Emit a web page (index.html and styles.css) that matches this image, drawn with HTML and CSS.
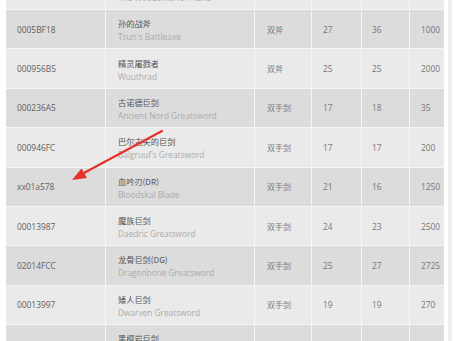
FILE: index.html
```html
<!DOCTYPE html>
<html lang="zh">
<head>
<meta charset="utf-8">
<title>双手武器代码</title>
<link rel="stylesheet" href="styles.css">
</head>
<body>
<div class="page">
  <div class="sheet">
    <div class="row light">
      <div class="cell id">000AE086</div>
      <div class="cell name"><span class="zh">伐木者之友</span><span class="en">The Woodsman's Friend</span></div>
      <div class="cell type">双斧</div>
      <div class="cell num">20</div>
      <div class="cell num">24</div>
      <div class="cell num">500</div>
    </div>
    <div class="row dark">
      <div class="cell id">0005BF18</div>
      <div class="cell name"><span class="zh">孙的战斧</span><span class="en">Tsun's Battleaxe</span></div>
      <div class="cell type">双斧</div>
      <div class="cell num">27</div>
      <div class="cell num">36</div>
      <div class="cell num">1000</div>
    </div>
    <div class="row light">
      <div class="cell id">000956B5</div>
      <div class="cell name"><span class="zh">精灵屠戮者</span><span class="en">Wuuthrad</span></div>
      <div class="cell type">双斧</div>
      <div class="cell num">25</div>
      <div class="cell num">25</div>
      <div class="cell num">2000</div>
    </div>
    <div class="row dark">
      <div class="cell id">000236A5</div>
      <div class="cell name"><span class="zh">古诺德巨剑</span><span class="en">Ancient Nord Greatsword</span></div>
      <div class="cell type">双手剑</div>
      <div class="cell num">17</div>
      <div class="cell num">18</div>
      <div class="cell num">35</div>
    </div>
    <div class="row light">
      <div class="cell id">000946FC</div>
      <div class="cell name"><span class="zh">巴尔古夫的巨剑</span><span class="en">Balgruuf's Greatsword</span></div>
      <div class="cell type">双手剑</div>
      <div class="cell num">17</div>
      <div class="cell num">17</div>
      <div class="cell num">200</div>
    </div>
    <div class="row dark">
      <div class="cell id">xx01a578</div>
      <div class="cell name"><span class="zh">血吟刃(DR)</span><span class="en">Bloodskal Blade</span></div>
      <div class="cell type">双手剑</div>
      <div class="cell num">21</div>
      <div class="cell num">16</div>
      <div class="cell num">1250</div>
    </div>
    <div class="row light">
      <div class="cell id">00013987</div>
      <div class="cell name"><span class="zh">魔族巨剑</span><span class="en">Daedric Greatsword</span></div>
      <div class="cell type">双手剑</div>
      <div class="cell num">24</div>
      <div class="cell num">23</div>
      <div class="cell num">2500</div>
    </div>
    <div class="row dark">
      <div class="cell id">02014FCC</div>
      <div class="cell name"><span class="zh">龙骨巨剑(DG)</span><span class="en">Dragonbone Greatsword</span></div>
      <div class="cell type">双手剑</div>
      <div class="cell num">25</div>
      <div class="cell num">27</div>
      <div class="cell num">2725</div>
    </div>
    <div class="row light">
      <div class="cell id">00013997</div>
      <div class="cell name"><span class="zh">矮人巨剑</span><span class="en">Dwarven Greatsword</span></div>
      <div class="cell type">双手剑</div>
      <div class="cell num">19</div>
      <div class="cell num">19</div>
      <div class="cell num">270</div>
    </div>
    <div class="row dark">
      <div class="cell id">0001399F</div>
      <div class="cell name"><span class="zh">黑檀岩巨剑</span><span class="en">Ebony Greatsword</span></div>
      <div class="cell type">双手剑</div>
      <div class="cell num">22</div>
      <div class="cell num">22</div>
      <div class="cell num">1440</div>
    </div>
  </div>
  <div class="rail"></div>
  <svg class="arrow" width="459" height="341" viewBox="0 0 459 341" aria-hidden="true">
    <line x1="162" y1="131" x2="82" y2="174" stroke="#e5322b" stroke-width="2.2" stroke-linecap="round"/>
    <polygon points="72,180 87,178 81.5,168.5" fill="#e5322b"/>
  </svg>
</div>
</body>
</html>
```

FILE: styles.css
```css
html, body {
  margin: 0;
  padding: 0;
  background: #ffffff;
}

.page {
  position: relative;
  width: 459px;
  height: 341px;
  overflow: hidden;
  display: flex;
  align-items: flex-start;
  font-family: "Open Sans", "Noto Sans CJK SC", sans-serif;
}

.sheet {
  margin-top: -29.375px;
  margin-left: 6px;
  width: 438px;
  flex: none;
  display: grid;
  row-gap: 1px;
  background: #f6f6f6;
}

.row {
  display: grid;
  grid-template-columns: 99px 148px 56px 49px 47px 34px;
  column-gap: 1px;
  height: 38.375px;
}

.cell {
  display: flex;
  align-items: center;
  padding-left: 11px;
  font-size: 8.4px;
  color: #777777;
  white-space: nowrap;
  overflow: visible;
  min-width: 0;
}

.row.dark .cell {
  background: #dcdcdc;
}

.row.light .cell {
  background: #eaeaea;
}

.cell.id {
  color: #606060;
  font-size: 8.4px;
}

.cell.name {
  flex-direction: column;
  align-items: flex-start;
  justify-content: center;
  padding-left: 12px;
  padding-top: 2px;
}

.cell.type {
  padding-left: 12px;
  color: #7a7a7a;
  font-size: 8px;
}

.cell.num:nth-child(5) {
  padding-left: 10px;
}

.zh {
  display: block;
  line-height: 13px;
  font-family: "Noto Sans CJK SC", "Open Sans", sans-serif;
  font-size: 8.2px;
  color: #555555;
}

.en {
  display: block;
  line-height: 13px;
  font-size: 8.3px;
  color: #ababab;
}

.rail {
  flex: none;
  margin-left: 4px;
  width: 4px;
  height: 341px;
  background: #efefef;
}

.arrow {
  position: absolute;
  top: 0;
  left: 0;
  pointer-events: none;
}
```
